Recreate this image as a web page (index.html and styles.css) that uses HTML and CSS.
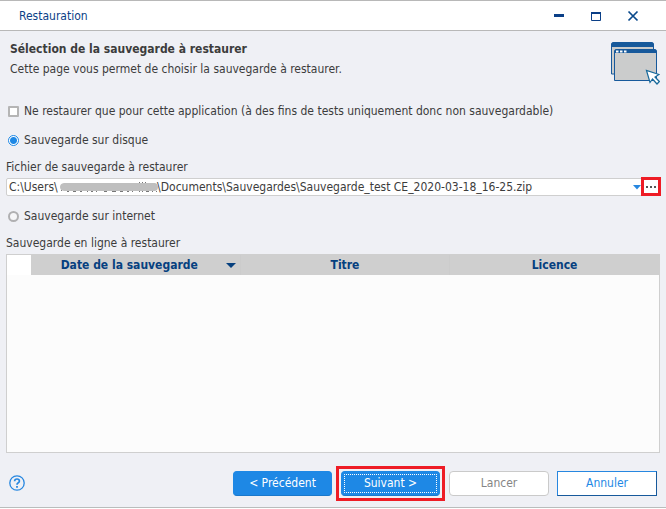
FILE: index.html
```html
<!DOCTYPE html>
<html lang="fr">
<head>
<meta charset="utf-8">
<title>Restauration</title>
<link rel="stylesheet" href="styles.css">
</head>
<body>
<div class="window">
  <header class="titlebar">
    <span class="titlebar-text">Restauration</span>
    <div class="titlebar-controls">
      <button type="button" class="win-btn" aria-label="Réduire"><svg width="12" height="12" viewBox="0 0 12 12"><path d="M1 5.500h10" stroke="#0b3f87" stroke-width="3"/></svg></button>
      <button type="button" class="win-btn" aria-label="Agrandir"><svg width="12" height="12" viewBox="0 0 12 12"><path d="M1.500 2v8.500h9V2" fill="none" stroke="#0b3f87"/><path d="M1 3h10" stroke="#0b3f87" stroke-width="2"/></svg></button>
      <button type="button" class="win-btn" aria-label="Fermer"><svg width="12" height="12" viewBox="0 0 12 12"><path d="M1.500 1.500l9 9M10.500 1.500l-9 9" stroke="#0b4a8c" stroke-width="1.700"/></svg></button>
    </div>
  </header>

  <main class="content">
    <section class="intro">
      <div>
        <h1 class="intro-title">Sélection de la sauvegarde à restaurer</h1>
        <p class="intro-text">Cette page vous permet de choisir la sauvegarde à restaurer.</p>
      </div>
      <svg class="intro-icon" width="49" height="44" viewBox="0 0 49 44" aria-hidden="true">
        <path d="M.5 32V3Q.5.500 3 .500h37q2.500 0 2.500 2.500v29z" fill="#cbcccc" stroke="#17599b"/>
        <path d="M0 5V3q0-3 3-3h37q3 0 3 3v2z" fill="#17599b"/>
        <path d="M3.500 38.500V10q0-2.500 2.500-2.500h37q2.500 0 2.500 2.500v28.500z" fill="#cbcccc" stroke="#17599b"/>
        <path d="M3 11v-1q0-3 3-3h37q3 0 3 3v1z" fill="#17599b"/>
        <path d="M5 8.500h2.500v2H5zM9 8.500h2.500v2H9zM13 8.500h2.500v2H13z" fill="#fff"/>
        <path d="M35.500 28.500l3.500 12 2.500-3.500 4.500 5 2.300-2.500-4.300-4.500 4-2.500z" fill="#fff" stroke="#17699b" stroke-width="1.200"/>
      </svg>
    </section>

    <label class="option"><input type="checkbox" class="check">Ne restaurer que pour cette application (à des fins de tests uniquement donc non sauvegardable)</label>
    <label class="option"><input type="radio" name="source" class="radio" checked>Sauvegarde sur disque</label>

    <label class="field-label field-label-file" for="file">Fichier de sauvegarde à restaurer</label>
    <div class="file-row">
      <input type="text" id="file" class="file-input" value="C:\Users\&nbsp;&nbsp;&nbsp;&nbsp;&nbsp;&nbsp;&nbsp;&nbsp;&nbsp;&nbsp;&nbsp;&nbsp;&nbsp;&nbsp;&nbsp;&nbsp;&nbsp;&nbsp;&nbsp;&nbsp;&nbsp;&nbsp;&nbsp;&nbsp;&nbsp;&nbsp;&nbsp;&nbsp;&nbsp;\Documents\Sauvegardes\Sauvegarde_test CE_2020-03-18_16-25.zip">
      <svg class="redaction" width="99" height="11" viewBox="0 0 99 11" aria-hidden="true">
        <path d="M1 8.500h1M7 9.500h2M13 9.500h3M20 9.500h2M27 9.500h1M31 9.500h2M36 9.500h1M44 9.500h3M52 9.500h4M60 9.500h3M67 9.500h2M72 9.500h1M79 9.500h1M82 9.500h1M86 9.500h3M92 9.500h1M96 9.500h1M79 .500h1M82 .500h1M85 .500h1" stroke="#777"/>
        <path d="M4 1h91q3 .500 3 4t-3 4H4Q0 8.500 0 5t4-4z" fill="#bfbfbf"/>
      </svg>
      <button type="button" class="drop-btn" aria-label="Fichiers récents"><svg width="8" height="5" viewBox="0 0 8 5"><path d="M0 0h8L4 4.500z" fill="#2787e0"/></svg></button>
      <button type="button" class="browse-btn" aria-label="Parcourir"><svg width="10" height="2" viewBox="0 0 10 2"><path d="M0 0h2v2H0zM4 0h2v2H4zM8 0h2v2H8z" fill="#555"/></svg></button>
    </div>
    <label class="option option-net"><input type="radio" name="source" class="radio">Sauvegarde sur internet</label>

    <p class="field-label" id="online">Sauvegarde en ligne à restaurer</p>
    <div class="grid-box">
      <table class="grid" aria-labelledby="online">
        <thead>
          <tr>
            <td class="grid-corner"></td>
            <th scope="col"><span class="sorted">Date de la sauvegarde<svg width="10" height="5" viewBox="0 0 10 5"><path d="M0 0h10L5 5z" fill="#06407f"/></svg></span></th>
            <th scope="col">Titre</th>
            <th scope="col">Licence</th>
          </tr>
        </thead>
      </table>
    </div>
  </main>

  <footer class="footer">
    <button type="button" class="help-btn" aria-label="Aide"><svg width="16" height="16" viewBox="0 0 16 16"><circle cx="8" cy="8" r="7.200" fill="none" stroke="#2787e0" stroke-width="1.300"/><path d="M5.600 6.300Q5.700 4 8 4t2.400 2Q10.400 7.200 9 8 8 8.600 8 9.800" fill="none" stroke="#2787e0" stroke-width="1.700"/><path d="M7.100 11h1.800v1.700H7.100z" fill="#2787e0"/></svg></button>
    <button type="button" class="btn btn-primary">&lt; Précédent</button>
    <span class="highlight"><button type="button" class="btn btn-primary btn-focus">Suivant &gt;</button></span>
    <button type="button" class="btn btn-disabled" disabled>Lancer</button>
    <button type="button" class="btn btn-cancel">Annuler</button>
  </footer>
</div>
</body>
</html>
```
FILE: styles.css
```css
* {
  box-sizing: border-box;
}

body {
  margin: 0;
  background: #fff;
  color: #3c3c3c;
  font: 12px/16px "DejaVu Sans Condensed", "DejaVu Sans", sans-serif;
}

button,
input {
  margin: 0;
  padding: 0;
  font: inherit;
  color: inherit;
}

svg {
  display: block;
}

p,
h1 {
  margin: 0;
}

.window {
  display: flex;
  flex-direction: column;
  min-height: calc(100vh - 1px);
  border-top: 1px solid #b8b8b8;
  border-bottom: 1px solid #b9bdbc;
  background: #eff0f5;
}

.titlebar {
  display: flex;
  align-items: center;
  justify-content: space-between;
  height: 30px;
  padding: 0 27px 0 19px;
  border-bottom: 1px solid #b8b8b8;
  background: #fff;
  color: #0b3f87;
}

.titlebar-controls {
  display: flex;
  gap: 25px;
}

.win-btn,
.help-btn {
  border: 0;
  background: none;
}

.content {
  display: flex;
  flex: 1;
  flex-direction: column;
  padding: 10px 6px 0;
}

.intro {
  display: flex;
  justify-content: space-between;
  height: 62px;
  padding-left: 4px;
}

.intro-title {
  margin-bottom: 4px;
  font-size: 12px;
}

.intro-icon {
  margin-top: 1px;
}

.option {
  display: flex;
  align-items: center;
  gap: 5px;
  margin-bottom: 13px;
  padding-left: 2px;
}

.check,
.radio {
  width: 11px;
  height: 11px;
  appearance: none;
  border: 1px solid #a9aaab;
  background: #fff;
}

.check {
  border-width: 2px;
  border-color: #b5b5b5;
  border-radius: 1px;
}

.radio {
  border-width: 2px;
  border-radius: 50%;
  border-color: #b0b0b2;
  background: #f6f6f8;
}

.radio:checked {
  border-width: 1px;
  border-color: #1e88e5;
  background: radial-gradient(circle, #1e88e5 3px, #fff 4px);
}

.field-label {
  margin-bottom: 3px;
}

.field-label-file {
  margin-top: -2px;
}

.file-row {
  position: relative;
  display: flex;
  height: 18px;
  border: 1px solid #cfcfcf;
  border-radius: 2px;
  background: #fff;
}

.file-input {
  flex: 1;
  min-width: 0;
  padding-left: 2px;
  border: 0;
  background: none;
}

.redaction {
  position: absolute;
  top: 3px;
  left: 53px;
}

.drop-btn {
  display: flex;
  align-items: center;
  justify-content: center;
  width: 8px;
  border: 0;
  background: none;
}

.browse-btn {
  display: flex;
  align-items: center;
  justify-content: center;
  width: 20px;
  margin: -2px -2px -1px 0;
  border: 3px solid #ee1c25;
  background: #fff;
}

.option-net {
  margin: 12px 0 11px;
}

.grid-box {
  flex: 1;
  border: 1px solid #cfcfcf;
  background: #fcfcfc;
}

.grid {
  width: 100%;
  table-layout: fixed;
  border-collapse: collapse;
  color: #06407f;
}

.grid th,
.grid td {
  height: 20px;
  padding: 0;
  background: #cfcfcf;
}

.grid th + th {
  border-left: 1px solid #cccccc;
}

.grid .grid-corner {
  width: 24px;
  background: #fff;
}

.sorted {
  display: flex;
  align-items: center;
  justify-content: flex-end;
  gap: 28px;
  padding-right: 4px;
}

.footer {
  display: flex;
  align-items: center;
  height: 54px;
  padding: 6px 9px 0;
}

.help-btn {
  margin-right: auto;
}

.btn {
  width: 100px;
  height: 25px;
  border: 1px solid #cacaca;
  border-radius: 4px;
  background: #fff;
}

.btn-primary {
  width: 99px;
  border-color: #1e88e5 #1e88e5 #1a78cb;
  background: #1e88e5;
  color: #fff;
}

.highlight {
  display: flex;
  margin: 0 4px;
  padding: 2px;
  border: 3px solid #ee1c25;
}

.btn-focus {
  outline: 1px dotted #fff;
  outline-offset: -4px;
}

.btn-disabled {
  color: #858585;
}

.btn-cancel {
  margin-left: 8px;
  border-color: #2787e0 #17599b #17599b #2787e0;
  border-radius: 0;
  color: #1e88e5;
}
```
